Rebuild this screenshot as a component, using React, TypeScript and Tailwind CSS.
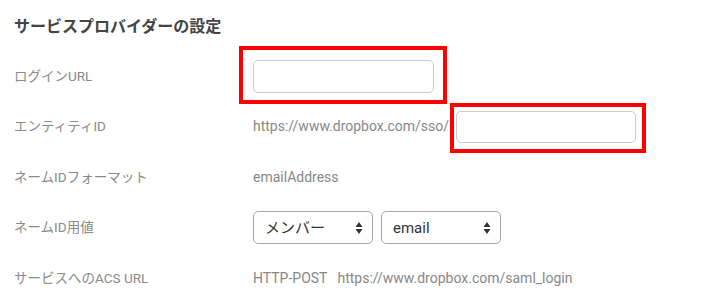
import type { ReactNode } from 'react';

const FONT = 'font-["Roboto","Noto_Sans_CJK_JP",sans-serif]';

const UpDownArrows = () => (
  <svg width="8" height="13" viewBox="0 0 8 13" className="absolute right-[9px] top-1/2 -translate-y-1/2 text-[#333]">
    <path d="M4 0.5 L7.5 5.5 H0.5 Z" fill="currentColor" />
    <path d="M4 12.5 L7.5 7.5 H0.5 Z" fill="currentColor" />
  </svg>
);

const Row = ({ label, children }: { label: string; children: ReactNode }) => (
  <div className="flex h-[50.5px] items-center">
    <div className="w-[239px] shrink-0 text-[13.5px] text-[#8a8a8a]">{label}</div>
    <div className="flex items-center text-[14px] text-[#888]">{children}</div>
  </div>
);

const Select = ({ value }: { value: string }) => (
  <div className="relative h-[33px] w-[120px] rounded-[5px] border border-[#a8a8a8] bg-white">
    <span className="absolute left-[11px] top-1/2 -translate-y-1/2 text-[15px] text-[#333]">{value}</span>
    <UpDownArrows />
  </div>
);

export default function App() {
  return (
    <div className={`${FONT} h-[300px] w-[721px] overflow-hidden bg-white pl-[14px]`}>
      <div className="h-[50.75px] pt-[17px] text-[16px] font-bold leading-[20px] text-[#444]">
        サービスプロバイダーの設定
      </div>

      <Row label="ログインURL">
        <span className="relative">
          <input className="block h-[33px] w-[181px] rounded-[5px] border border-[#cccccc] bg-white outline-none" />
          <span className="pointer-events-none absolute -bottom-[11px] -left-[14px] -right-[13px] -top-[14px] border-4 border-[#ff0000]" />
        </span>
      </Row>

      <Row label="エンティティID">
        <span>https://www.dropbox.com/sso/</span>
        <span className="relative ml-[7px]">
          <input className="block h-[32px] w-[180px] rounded-[5px] border border-[#cccccc] bg-white outline-none" />
          <span className="pointer-events-none absolute -bottom-[10px] -left-[6px] -right-[10px] -top-[8px] border-4 border-[#ff0000]" />
        </span>
      </Row>

      <Row label="ネームIDフォーマット">
        <span>emailAddress</span>
      </Row>

      <Row label="ネームID用値">
        <div className="flex gap-[8px]">
          <Select value="メンバー" />
          <Select value="email" />
        </div>
      </Row>

      <Row label="サービスへのACS URL">
        <span>HTTP-POST</span>
        <span className="ml-[10px]">https://www.dropbox.com/saml_login</span>
      </Row>
    </div>
  );
}
